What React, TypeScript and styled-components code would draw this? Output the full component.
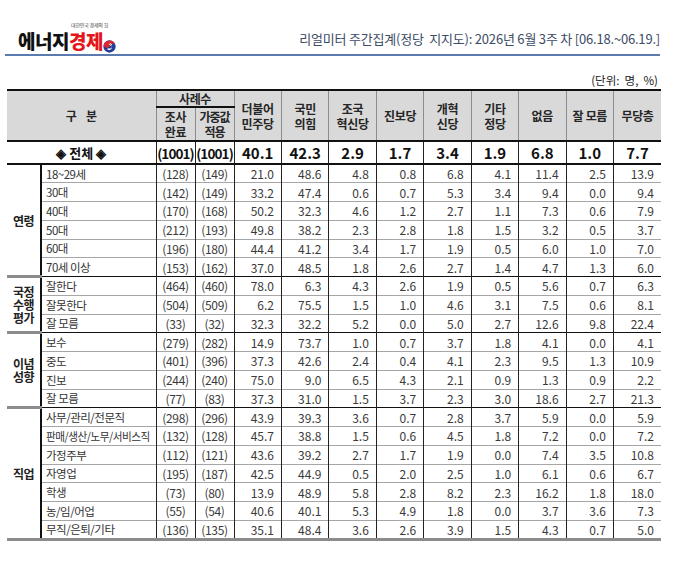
import React, { FC, Fragment } from "react"
import styled, { createGlobalStyle } from "styled-components"

const FONT = `"Noto Sans CJK KR", "Noto Sans", sans-serif`

const GlobalStyle = createGlobalStyle`
  body {
    margin: 0;
    background: #fff;
    font-family: ${FONT};
  }
`

type Row = { label: string; values: Array<string> }
type Group = { name: Array<string>; rows: Array<Row> }

const PARTIES = [
  ["더불어", "민주당"],
  ["국민", "의힘"],
  ["조국", "혁신당"],
  ["진보당"],
  ["개혁", "신당"],
  ["기타", "정당"],
  ["없음"],
  ["잘 모름"],
  ["무당층"],
]

const TOTAL = ["(1001)", "(1001)", "40.1", "42.3", "2.9", "1.7", "3.4", "1.9", "6.8", "1.0", "7.7"]

const r = (label: string, line: string): Row => ({ label, values: line.split(" ") })

const GROUPS: Array<Group> = [
  {
    name: ["연령"],
    rows: [
      r("18~29세", "(128) (149) 21.0 48.6 4.8 0.8 6.8 4.1 11.4 2.5 13.9"),
      r("30대", "(142) (149) 33.2 47.4 0.6 0.7 5.3 3.4 9.4 0.0 9.4"),
      r("40대", "(170) (168) 50.2 32.3 4.6 1.2 2.7 1.1 7.3 0.6 7.9"),
      r("50대", "(212) (193) 49.8 38.2 2.3 2.8 1.8 1.5 3.2 0.5 3.7"),
      r("60대", "(196) (180) 44.4 41.2 3.4 1.7 1.9 0.5 6.0 1.0 7.0"),
      r("70세 이상", "(153) (162) 37.0 48.5 1.8 2.6 2.7 1.4 4.7 1.3 6.0"),
    ],
  },
  {
    name: ["국정", "수행", "평가"],
    rows: [
      r("잘한다", "(464) (460) 78.0 6.3 4.3 2.6 1.9 0.5 5.6 0.7 6.3"),
      r("잘못한다", "(504) (509) 6.2 75.5 1.5 1.0 4.6 3.1 7.5 0.6 8.1"),
      r("잘 모름", "(33) (32) 32.3 32.2 5.2 0.0 5.0 2.7 12.6 9.8 22.4"),
    ],
  },
  {
    name: ["이념", "성향"],
    rows: [
      r("보수", "(279) (282) 14.9 73.7 1.0 0.7 3.7 1.8 4.1 0.0 4.1"),
      r("중도", "(401) (396) 37.3 42.6 2.4 0.4 4.1 2.3 9.5 1.3 10.9"),
      r("진보", "(244) (240) 75.0 9.0 6.5 4.3 2.1 0.9 1.3 0.9 2.2"),
      r("잘 모름", "(77) (83) 37.3 31.0 1.5 3.7 2.3 3.0 18.6 2.7 21.3"),
    ],
  },
  {
    name: ["직업"],
    rows: [
      r("사무/관리/전문직", "(298) (296) 43.9 39.3 3.6 0.7 2.8 3.7 5.9 0.0 5.9"),
      r("판매/생산/노무/서비스직", "(132) (128) 45.7 38.8 1.5 0.6 4.5 1.8 7.2 0.0 7.2"),
      r("가정주부", "(112) (121) 43.6 39.2 2.7 1.7 1.9 0.0 7.4 3.5 10.8"),
      r("자영업", "(195) (187) 42.5 44.9 0.5 2.0 2.5 1.0 6.1 0.6 6.7"),
      r("학생", "(73) (80) 13.9 48.9 5.8 2.8 8.2 2.3 16.2 1.8 18.0"),
      r("농/임/어업", "(55) (54) 40.6 40.1 5.3 4.9 1.8 0.0 3.7 3.6 7.3"),
      r("무직/은퇴/기타", "(136) (135) 35.1 48.4 3.6 2.6 3.9 1.5 4.3 0.7 5.0"),
    ],
  },
]

const Emblem: FC = () => (
  <svg width="13" height="13" viewBox="0 0 20 20">
    <circle cx="10" cy="10" r="9.5" fill="#1f3f9a" />
    <path d="M1 9 A9 9 0 0 1 18 6 C14 4 11 7 10 10 C8 13 4 13 1 9 Z" fill="#e0262b" />
    <path d="M6 14 C9 12 11 14 14 11 C13 15 9 17 6 14 Z" fill="#fff" />
    <path d="M9 6 L13 9 M11 5 L14 8" stroke="#fff" strokeWidth="1.4" />
  </svg>
)

// 여러 줄 헤더 글자를 <br />로 이어 붙임
const lines = (parts: Array<string>) =>
  parts.map((t, i) => (
    <Fragment key={i}>
      {i > 0 ? <br /> : null}
      {t}
    </Fragment>
  ))

export default function App() {
  return (
    <>
      <GlobalStyle />
      <Page>
        <TopBar>
          <Logo>
            <Tagline>대한민국 경제의 힘</Tagline>
            <LogoBlack>에너지</LogoBlack>
            <LogoRed>경제</LogoRed>
            <EmblemBox>
              <Emblem />
            </EmblemBox>
          </Logo>
          <Title>리얼미터 주간집계(정당&nbsp;&nbsp;지지도): 2026년 6월 3주 차 [06.18.~06.19.]</Title>
        </TopBar>
        <Unit>(단위:&nbsp; 명,&nbsp; %)</Unit>
        <Table>
          <colgroup>
            <col style={{ width: 34 }} />
            <col style={{ width: 115 }} />
            <col style={{ width: 39 }} />
            <col style={{ width: 39 }} />
            {PARTIES.map((_, i) => (
              <col key={i} />
            ))}
          </colgroup>
          <thead>
            <HeadRow $h={17}>
              <HeadCell colSpan={2} rowSpan={2}>
                구&nbsp;&nbsp;&nbsp;&nbsp;분
              </HeadCell>
              <HeadCell colSpan={2}>사례수</HeadCell>
              {PARTIES.map((p, i) => (
                <HeadCell key={i} rowSpan={2}>
                  {lines(p)}
                </HeadCell>
              ))}
            </HeadRow>
            <HeadRow $h={34}>
              <HeadCell>{lines(["조사", "완료"])}</HeadCell>
              <HeadCell $tight>{lines(["가중값", "적용"])}</HeadCell>
            </HeadRow>
          </thead>
          <tbody>
            <TotalRow>
              <TotalCell colSpan={2}>◈ 전체 ◈</TotalCell>
              {TOTAL.map((v, i) => (
                <TotalCell key={i} $tight={i < 2}>
                  {v}
                </TotalCell>
              ))}
            </TotalRow>
            {GROUPS.map((g, gi) =>
              g.rows.map((row, ri) => (
                <DataRow key={`${gi}-${ri}`} $groupStart={ri === 0} $last={gi === GROUPS.length - 1 && ri === g.rows.length - 1}>
                  {ri === 0 ? <GroupCell rowSpan={g.rows.length}>{lines(g.name)}</GroupCell> : null}
                  <LabelCell>
                    <LabelText $narrow={row.label.length > 10}>{row.label}</LabelText>
                  </LabelCell>
                  {row.values.map((v, i) => (
                    <ValueCell key={i} $count={i < 2}>
                      {v}
                    </ValueCell>
                  ))}
                </DataRow>
              ))
            )}
          </tbody>
        </Table>
      </Page>
    </>
  )
}

const Page = styled.div`
  width: 681px;
  height: 564px;
  padding: 0 0 0 7px;
  box-sizing: border-box;
  overflow: hidden;
`

const TopBar = styled.div`
  display: flex;
  align-items: flex-end;
  justify-content: space-between;
  width: 655px;
  margin: 0 0 0 -2px;
  padding: 22px 0 4px 13px;
  border-bottom: 2px solid #5b7bb0;
  box-sizing: border-box;
  height: 56px;
`

const Logo = styled.div`
  position: relative;
  display: flex;
  align-items: flex-end;
  line-height: 1;
`

const Tagline = styled.span`
  position: absolute;
  left: 53px;
  top: -9px;
  font-size: 5px;
  line-height: 6px;
  color: #444;
  letter-spacing: -0.2px;
  white-space: nowrap;
`

const LogoBlack = styled.span`
  font-size: 19px;
  font-weight: 900;
  color: #111;
  letter-spacing: -0.5px;
`

const LogoRed = styled(LogoBlack)`
  color: #e3161b;
`

const EmblemBox = styled.span`
  display: flex;
  margin: 0 0 -3px 0;
`

const Title = styled.div`
  font-size: 13px;
  color: #3d4b66;
  letter-spacing: -0.2px;
  margin-bottom: 2px;
`

const Unit = styled.div`
  width: 651px;
  text-align: right;
  font-size: 11.5px;
  color: #222;
  margin-top: 16px;
  height: 16px;
  line-height: 16px;
`

const Table = styled.table`
  width: 654px;
  margin-top: 1px;
  border-collapse: collapse;
  table-layout: fixed;
  font-family: ${FONT};
  color: #333;
`

const HeadRow = styled.tr<{ $h: number }>`
  height: ${({ $h }) => $h}px;
`

const HeadCell = styled.th<{ $tight?: boolean }>`
  background: #d9d9d9;
  border: 1px solid #8c8c8c;
  border-top: 2px solid #111;
  border-bottom: 2px solid #111;
  font-size: 12px;
  font-weight: 600;
  color: #262626;
  line-height: 15px;
  padding: 0;
  letter-spacing: ${({ $tight }) => ($tight ? "-1px" : "-0.3px")};
  white-space: nowrap;
  text-align: center;
  vertical-align: middle;
  &:first-child {
    border-left: none;
  }
  &:last-child {
    border-right: none;
  }
  tr + tr & {
    border-top: 1px solid #8c8c8c;
  }
`

const TotalRow = styled.tr`
  height: 23px;
`

const TotalCell = styled.td<{ $tight?: boolean }>`
  border-left: 1px solid #222;
  border-bottom: 2px solid #111;
  font-size: ${({ $tight }) => ($tight ? "13.5px" : "15px")};
  font-weight: 600;
  color: #111;
  text-align: center;
  padding: 0;
  letter-spacing: ${({ $tight }) => ($tight ? "-0.9px" : "0")};
  white-space: nowrap;
  &:first-child {
    border-left: none;
    font-size: 13px;
  }
`

const DataRow = styled.tr<{ $groupStart: boolean; $last: boolean }>`
  height: 18.75px;
  & > td {
    border-top: ${({ $groupStart }) => ($groupStart ? "1px solid #111" : "1px solid #a6a6a6")};
    border-bottom: ${({ $last }) => ($last ? "3px solid #8c8c8c" : "none")};
  }
`

const GroupCell = styled.td`
  && {
    border-top: 1px solid #111;
    border-bottom: 3px solid #8c8c8c;
  }
  border-right: 2px solid #111;
  font-size: 12px;
  font-weight: 700;
  color: #222;
  line-height: 13px;
  letter-spacing: -0.5px;
  text-align: center;
  padding: 0;
`

const LabelCell = styled.td`
  font-size: 11.5px;
  color: #333;
  padding: 0 0 0 4px;
  white-space: nowrap;
  overflow: hidden;
`

const LabelText = styled.span<{ $narrow?: boolean }>`
  display: inline-block;
  letter-spacing: -0.5px;
  transform: ${({ $narrow }) => ($narrow ? "scaleX(0.92)" : "none")};
  transform-origin: left center;
`

const ValueCell = styled.td<{ $count?: boolean }>`
  border-left: 1px solid #222;
  font-size: 12px;
  color: #3a3a3a;
  padding: ${({ $count }) => ($count ? "0" : "0 7px 0 0")};
  text-align: ${({ $count }) => ($count ? "center" : "right")};
  letter-spacing: ${({ $count }) => ($count ? "-0.3px" : "0")};
  white-space: nowrap;
`
